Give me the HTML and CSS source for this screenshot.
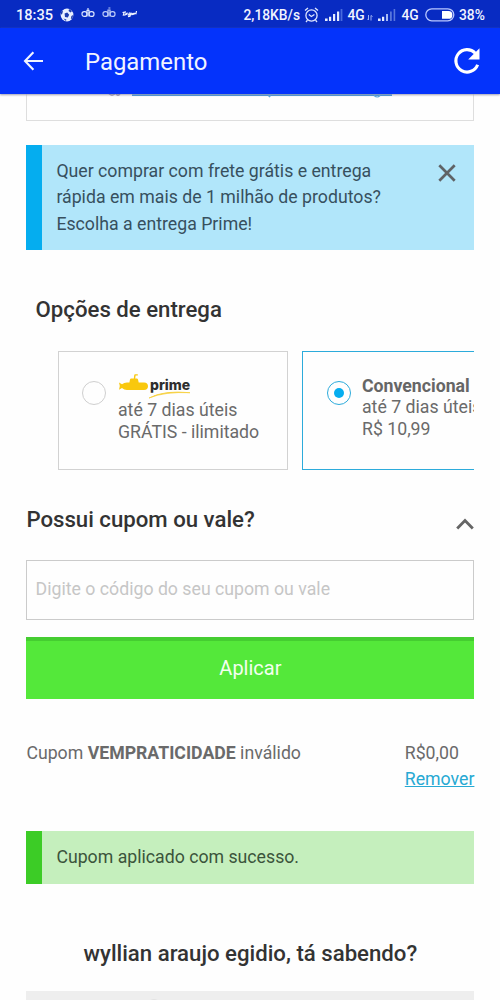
FILE: index.html
```html
<!DOCTYPE html>
<html lang="pt-BR">
<head>
<meta charset="utf-8">
<title>Pagamento</title>
<link rel="stylesheet" href="styles.css">
</head>
<body>
<div class="screen">
  <div class="status">
    <span class="time">18:35</span>
    <svg class="ball" width="14" height="14" viewBox="0 0 14 14"><circle cx="7" cy="7" r="6.4" fill="#e9efff"/><path d="M4.6 5.6l2.6-1 2 2.2-1.4 2.6-2.8-.4zM9 1l3 2-1.4 1.4L8.6 3zM11.4 8l1.8-1-.8 3.4-1.6.6zM1 4l2-1.4-.6 3L.9 7zM3.4 10.6l3 .8-.4 1.6z" fill="#1e3cae"/></svg>
    <svg class="sub1" width="14" height="11" viewBox="0 0 14 11"><g fill="none" stroke="#dce5ff" stroke-width="1.2"><rect x="1" y="4.6" width="5" height="4.8" rx="2.2"/><rect x="8" y="4.6" width="5" height="4.8" rx="2.2"/><path d="M6 9.4V3.4h2v6M7 3.4V1"/></g></svg>
    <svg class="sub2" width="14" height="11" viewBox="0 0 14 11"><g fill="none" stroke="#bccbf8" stroke-width="1.2"><rect x="1" y="4.6" width="5" height="4.8" rx="2.2"/><rect x="8" y="4.6" width="5" height="4.8" rx="2.2"/><path d="M6 9.4V3h2v6.4M6.4 1h2"/></g></svg>
    <svg class="brand" width="15" height="8" viewBox="0 0 15 8"><path d="M.5 2.5l3.5-.7M2.2 2L1.4 5l1.8-.1L4.4 3M5.4 2.6L4.6 5M7.6 2.6l-1 2.2 1.6-.2L9 2.6 8 6.2l-2 .5M10.2 2.8L9.8 4.6l1.2-.2.6-1.4-.2 1.6M12.4 4.4l.6-1.6M14.5 1L13.8 4.4" fill="none" stroke="#f0f4ff" stroke-width="1.2"/></svg>
    <span class="rate">2,18KB/s</span>
    <svg class="alarm" width="15" height="16" viewBox="0 0 15 16"><g fill="none" stroke="#dfe7ff" stroke-width="1.3"><circle cx="7.5" cy="8.5" r="5.6"/><path d="M4.8 7.5l2.6 2 3-2M1 3.6L4 1M14 3.6L11 1M3.5 13.2L2 15M11.5 13.2L13 15"/></g></svg>
    <svg class="bars1" width="18" height="12" viewBox="0 0 18 12"><path d="M0 9.6h2.6V12H0zM4 7.8h2.2V12H4zM8 5h2.2v7H8zM12 2.5h2.2V12H12z" fill="#e6edff"/><path d="M15.6 0h1.8v12h-1.8z" fill="#476add"/></svg>
    <span class="net">4G</span>
    <svg class="arrows" width="6" height="6" viewBox="0 0 6 6"><path d="M1.5 0v5L.3 3.8M4 5.5v-5l1.5 1" fill="none" stroke="#9cb0f2" stroke-width="1"/></svg>
    <svg class="bars2" width="18" height="12" viewBox="0 0 18 12"><path d="M0 9.6h2.6V12H0zM4 7.8h2.2V12H4z" fill="#e6edff"/><path d="M8 5h2v7H8z" fill="#a7baf5"/><path d="M12 2.5h1.8V12H12zM15.6 0h1.6v12h-1.6z" fill="#5876dd"/></svg>
    <span class="net net2">4G</span>
    <svg class="battery" width="30" height="14" viewBox="0 0 30 14"><rect x=".8" y=".8" width="28" height="12" rx="6" fill="none" stroke="#b9c8ff" stroke-width="1.3"/><path d="M17 3h6.5a3.8 3.8 0 0 1 0 7.8H17z" fill="#fff"/></svg>
    <span class="pct">38%</span>
  </div>
  <header class="appbar">
    <svg class="back" width="20" height="20" viewBox="0 0 20 20"><path d="M10.4 1.2L2 10l8.4 8.8M2 10h18" fill="none" stroke="#f0f4ff" stroke-width="2.1"/></svg>
    <h1 class="title">Pagamento</h1>
    <svg class="reload" width="28" height="28" viewBox="0 0 28 28"><path d="M24.6 17.7A11.2 11.2 0 1 1 22.3 6.2" fill="none" stroke="#fff" stroke-width="3.1"/><path d="M26.5 1.2v11.3H15.2z" fill="#fff"/></svg>
  </header>
  <main class="content">
    <div class="address">
      <svg class="address-link" width="290" height="6" viewBox="0 0 290 6"><path d="M1 0q3 2 6 0M8 0q2 2 4 0" fill="none" stroke="#776a94" stroke-width="1.5"/><path d="M24 .9h260" stroke="#2f90dc" stroke-width="2.2"/><path d="M160 2l2 0-.6 1.2M266 1.5q3.5 3 6 0" fill="none" stroke="#54a6e2" stroke-width="1.2"/></svg>
    </div>
    <div class="notice">
      <p class="notice-text">Quer comprar com frete grátis e entrega<br>rápida em mais de 1 milhão de produtos?<br>Escolha a entrega Prime!</p>
      <svg class="close" width="18" height="18" viewBox="0 0 18 18"><path d="M1.3 1.3l15.4 15.4M16.7 1.3L1.3 16.7" stroke="#5f6366" stroke-width="2.7"/></svg>
    </div>
    <h2 class="heading shipping">Opções de entrega</h2>
    <div class="options">
      <div class="option">
        <span class="radio"></span>
        <div class="option-text">
          <div class="prime-logo">
            <svg class="sub-icon" width="31" height="18" viewBox="0 0 31 18"><path d="M1 9.4l3 1.8q2-1.7 5-1.8h2.4l.6-3q.2-1 1.2-1h2.6l.4-3.2q.1-1 1-1h2.6v1.3h-2.2l-.4 2.9h1.6q.9 0 1.2 1l.7 3H26q4 .2 4 3.8t-4 3.8H9q-3 0-5-2l-3 1.8.8-3.7z" fill="#f9c80e"/></svg>
            <span class="prime-word">prime</span>
            <svg class="swoosh" width="42" height="8" viewBox="0 0 42 8"><path d="M0 7Q15-1 41 1.7 16 .5 0 7z" fill="#f6cf35" stroke="#f6cf35" stroke-width=".7"/></svg>
          </div>
          <div>até 7 dias úteis</div>
          <div>GRÁTIS - ilimitado</div>
        </div>
      </div>
      <div class="option selected">
        <span class="radio on"></span>
        <div class="option-text">
          <div><b>Convencional</b></div>
          <div>até 7 dias úteis</div>
          <div>R$ 10,99</div>
        </div>
      </div>
    </div>
    <div class="coupon-head">
      <h2 class="heading">Possui cupom ou vale?</h2>
      <svg class="chevron" width="18" height="12" viewBox="0 0 18 12"><path d="M1.2 10.4L9 2.4l7.8 8" fill="none" stroke="#656565" stroke-width="2.8"/></svg>
    </div>
    <div class="field">Digite o código do seu cupom ou vale</div>
    <div class="apply">Aplicar</div>
    <div class="coupon">
      <div class="coupon-name">Cupom <b>VEMPRATICIDADE</b> inválido</div>
      <div class="coupon-value">R$0,00<br><span class="remove">Remover</span></div>
    </div>
    <div class="success">Cupom aplicado com sucesso.</div>
    <h2 class="heading know">wyllian araujo egidio, tá sabendo?</h2>
    <div class="panel"><span class="panel-dot"></span></div>
  </main>
</div>
</body>
</html>
```
FILE: styles.css
```css
* { box-sizing: border-box; }
body { margin: 0; background: #fefefe; font-family: Roboto, "Liberation Sans", sans-serif; }
h1, h2, p { margin: 0; font-weight: 400; }
svg { display: block; flex: none; }
.screen { width: 500px; height: 1000px; overflow: hidden; }

.status { display: flex; height: 28px; padding: 1px 0 0 16px; align-items: center; background: #082bc2; color: #f1f4ff; font-size: 13.8px; font-weight: 500; line-height: 28px; white-space: nowrap; }
.status span { flex: none; }
.time { width: 45px; font-size: 14.6px; }
.ball { margin-left: -1px; }
.sub1 { margin: -4px 0 0 7px; }
.sub2 { margin: -4px 0 0 7px; }
.brand { margin: -2px 0 0 6px; }
.rate { width: 60px; margin-left: 106.5px; }
.alarm { margin: 0 6px 0 0; }
.net { width: 17px; margin-left: 5px; }
.arrows { margin: 6px 5px 0 2px; }
.net2 { width: 23px; margin-left: 6px; }
.pct { margin-left: 4.5px; }

.appbar { display: flex; height: 66px; padding: 0 19px 0 23px; align-items: center; background: #0433fb; color: #f1f4ff; box-shadow: 0 1px 2px #9d9db2; position: relative; }
.title { flex: 1; margin: 2px 0 0 42px; font-size: 23.9px; line-height: 30px; }

.content { display: flow-root; padding: 0 25.6px 0 26.4px; }
.address { height: 27px; margin: 0 0 24px; padding-left: 81px; border: solid #dedede; border-width: 0 1.4px 1.4px; }
.notice { display: flex; justify-content: space-between; height: 105px; padding: 13px 18px 0 14px; border-left: 16px solid #05adef; background: #b1e6fa; }
.notice-text { font-size: 17.72px; line-height: 26.3px; color: #37505e; white-space: nowrap; }
.close { margin-top: 6px; }

.heading { font-size: 22.2px; font-weight: 500; line-height: 28px; color: #333; white-space: nowrap; }
.shipping { margin: 45px 0 0 9.2px; }
.options { display: flex; gap: 14px; height: 119px; margin-top: 28px; padding-left: 31.6px; overflow: hidden; }
.option { display: flex; flex: 0 0 230px; padding: 24px 0 0 23px; border: 1.4px solid #d2d2d2; }
.selected { border-color: #2cabdb; padding-top: 23.5px; padding-left: 24px; }
.radio { flex: none; display: flex; width: 24px; height: 24px; margin: 5px 12px 0 0; border: 1.5px solid #cfcfcf; border-radius: 50%; }
.radio.on { margin-right: 11px; border-color: #2cabdb; }
.radio.on::after { content: ""; width: 10px; height: 10px; margin: auto; border-radius: 50%; background: #05adef; }
.option-text { font-size: 17.7px; line-height: 21.8px; color: #6a6a6a; white-space: nowrap; }
.option-text b { color: #666; }
.prime-logo { display: flex; position: relative; height: 24px; }
.sub-icon { margin-top: -3px; }
.prime-word { margin: -2px 0 0 1px; font-family: Inter, sans-serif; font-size: 14px; font-weight: 800; color: #2e2e2e; }
.swoosh { position: absolute; left: 31px; top: 15px; }

.coupon-head { display: flex; justify-content: space-between; margin-top: 35px; height: 55px; }
.chevron { margin-top: 13px; }
.field { height: 60px; padding: 0 8.2px; border: 1.6px solid #cbcbcb; font-size: 17.7px; line-height: 57px; color: #c6c6c6; white-space: nowrap; }
.apply { height: 62px; margin-top: 17px; border-top: 4px solid #45cd31; background: #54e83a; color: #f3fff0; font-size: 20px; line-height: 54px; text-align: center; }
.coupon { display: flex; justify-content: space-between; margin-top: 41px; font-size: 17.72px; line-height: 26px; color: #6a6a6a; white-space: nowrap; }
.remove { color: #27a9d3; text-decoration: underline; }
.success { height: 53px; margin-top: 39px; padding-left: 14px; border-left: 16px solid #3ccc26; background: #c5efbd; color: #3b543b; font-size: 17.72px; line-height: 52px; white-space: nowrap; }
.know { margin-top: 55px; text-align: center; }
.panel { display: flex; height: 12px; margin-top: 24px; padding: 8px 0 0 121px; background: #eee; overflow: hidden; }
.panel-dot { width: 14px; height: 14px; border-radius: 50%; background: #e3e3e3; }
```
